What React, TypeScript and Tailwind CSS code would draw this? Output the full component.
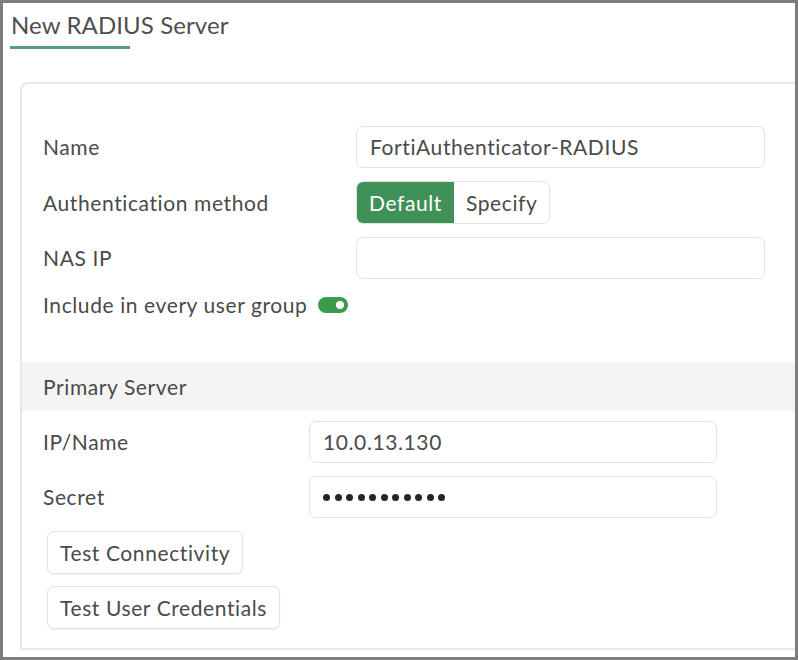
import type { ReactNode } from "react";

export default function App() {
  return (
    <div className="h-[660px] w-[798px] overflow-hidden border-[3px] border-[#7d7d7d] bg-white font-['Lato','Open_Sans',sans-serif] text-[#4a4a4a]">
      <div className="pl-[8px] pt-[7px]">
        <h1 className="text-[24px] leading-[30px] tracking-[0.1px] text-[#4f4f4f]">New RADIUS Server</h1>
        <div className="ml-[-1px] mt-[6px] h-[3px] w-[120px] bg-[#54a07c]" />
      </div>

      <div className="ml-[17px] mt-[33px] h-[568px] rounded-tl-[8px] border-l-2 border-t-2 border-b-2 border-[#e8e8e8] text-[21px] tracking-[0.6px]">
        <div className="flex flex-col gap-[13px] px-[21px] pt-[42px]">
          <FormRow label="Name" inputLeft="w-[313px]">
            <TextBox className="w-[409px]">FortiAuthenticator-RADIUS</TextBox>
          </FormRow>

          <FormRow label="Authentication method" inputLeft="w-[313px]">
            <div className="flex h-[43px] overflow-hidden rounded-[7px] border border-[#e2e2e2]">
              <span className="flex items-center bg-[#3f9157] px-[12px] text-white">Default</span>
              <span className="flex items-center px-[12px] text-[#4a4a4a]">Specify</span>
            </div>
          </FormRow>

          <FormRow label="NAS IP" inputLeft="w-[313px]">
            <TextBox className="w-[409px]" />
          </FormRow>

          <div className="mt-[-3px] flex h-[32px] items-center gap-[10px]">
            <span>Include in every user group</span>
            <Toggle />
          </div>
        </div>

        <div className="mt-[41px] flex h-[49px] items-center bg-[#f4f4f4] pl-[21px]">
          Primary Server
        </div>

        <div className="flex flex-col gap-[13px] px-[21px] pt-[10px]">
          <FormRow label="IP/Name" inputLeft="w-[266px]">
            <TextBox className="w-[408px]">10.0.13.130</TextBox>
          </FormRow>

          <FormRow label="Secret" inputLeft="w-[266px]">
            <div className="flex h-[42px] w-[408px] items-center gap-[4.5px] rounded-[7px] border border-[#e2e2e2] px-[13px]">
              {Array.from({ length: 11 }).map((_, i) => (
                <span key={i} className="h-[7px] w-[7px] rounded-full bg-[#262626]" />
              ))}
            </div>
          </FormRow>

          <div className="flex flex-col items-start gap-[12px] pl-[4px]">
            <Button>Test Connectivity</Button>
            <Button>Test User Credentials</Button>
          </div>
        </div>
      </div>
    </div>
  );
}

function FormRow({
  label,
  inputLeft,
  children,
}: {
  label: string;
  inputLeft: string;
  children: ReactNode;
}) {
  return (
    <div className="flex items-center">
      <span className={inputLeft}>{label}</span>
      {children}
    </div>
  );
}

function TextBox({ className, children }: { className: string; children?: ReactNode }) {
  return (
    <div
      className={[
        "flex h-[42px] items-center rounded-[7px] border border-[#e2e2e2] px-[13px] text-[#4a4a4a]",
        className,
      ].join(" ")}
    >
      {children}
    </div>
  );
}

function Toggle() {
  return (
    <span className="flex h-[16px] w-[30px] items-center justify-end rounded-full bg-[#3b9a4c] pr-[2px]">
      <span className="h-[12px] w-[12px] rounded-full border-2 border-[#3b9a4c] bg-white" />
    </span>
  );
}

function Button({ children }: { children: ReactNode }) {
  return (
    <button
      type="button"
      className="h-[43px] rounded-[7px] border border-[#e2e2e2] bg-white px-[12px] tracking-[0.6px] text-[#4a4a4a] shadow-[0_1px_2px_rgba(0,0,0,0.06)]"
    >
      {children}
    </button>
  );
}
